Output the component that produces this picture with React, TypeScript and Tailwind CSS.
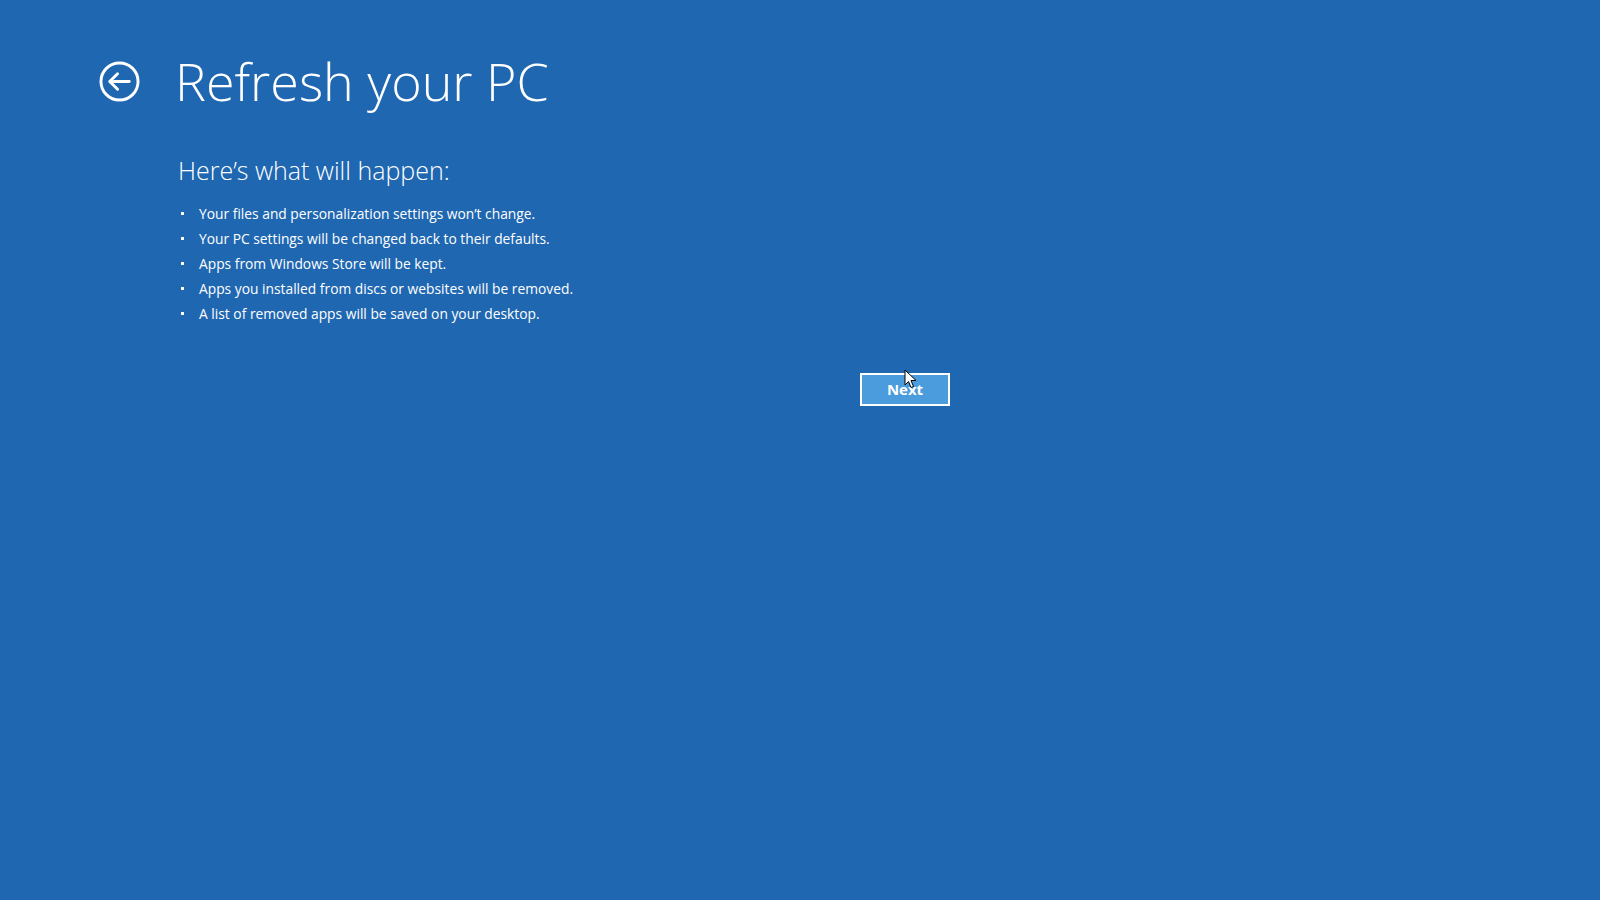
import React from 'react';

const items = [
    'Your files and personalization settings won’t change.',
    'Your PC settings will be changed back to their defaults.',
    'Apps from Windows Store will be kept.',
    'Apps you installed from discs or websites will be removed.',
    'A list of removed apps will be saved on your desktop.',
];

const BackIcon = () => (
    <svg width="41" height="41" viewBox="0 0 42 42" fill="none" stroke="white" strokeWidth="3">
        <circle cx="21" cy="21" r="19" />
        <path d="M11 21 H31 M19 13 L11 21 L19 29" strokeLinecap="round" strokeLinejoin="round" />
    </svg>
);

const Cursor = () => (
    <svg width="14" height="21" viewBox="0 0 14 21" className="absolute left-[44px] top-[-4px]">
        <path d="M1 1 L1 16 L4.5 12.5 L7 18.5 L9.5 17.5 L7 11.5 L12 11.5 Z" fill="white" stroke="black" strokeWidth="1" strokeLinejoin="round" />
    </svg>
);

export default function App() {
    return (
        <div className="w-[1600px] h-[900px] bg-[#1f67b1] text-white font-['Open_Sans',sans-serif] overflow-hidden">
            <div className="flex items-center pl-[99px] pt-[51px]">
                <BackIcon />
                <h1 className="ml-[35px] text-[52px] font-light leading-[60px]">Refresh your PC</h1>
            </div>
            <div className="pl-[178px] mt-[41px]">
                <h2 className="text-[25px] font-light leading-[36px]">Here’s what will happen:</h2>
                <ul className="mt-[13px]">
                    {items.map(item => (
                        <li key={item} className="flex items-center h-[25px] text-[13.8px] leading-[25px]">
                            <span className="w-[3px] h-[3px] bg-white mr-[15px] ml-[3px]"></span>
                            <span>{item}</span>
                        </li>
                    ))}
                </ul>
            </div>
            <div className="pl-[860px] mt-[47px]">
                <div className="relative w-[90px]">
                    <button className="w-[90px] h-[33px] border-2 border-white bg-[#4a9cdc] text-[15px] font-bold text-white">
                        Next
                    </button>
                    <Cursor />
                </div>
            </div>
        </div>
    );
}
